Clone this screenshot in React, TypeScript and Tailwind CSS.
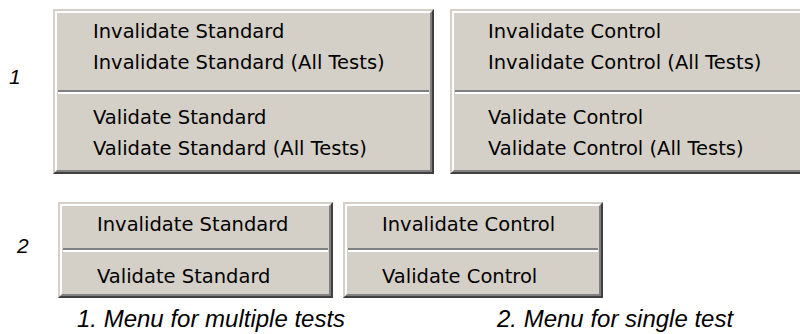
const menuFont = { fontFamily: '"DejaVu Sans", Tahoma, sans-serif' };
const labelFont = { fontFamily: '"Liberation Sans", Arial, sans-serif' };

const Separator = ({ h, top }: { h: string; top: string }) => (
  <div className={`${h} ${top} px-[1px]`}>
    <div className="h-[2px] bg-[#808080]" />
    <div className="h-[2px] bg-white" />
  </div>
);

const Menu = ({
  groups,
  width,
  itemH,
  padL,
  padT,
  padB,
  sepH,
  sepTop,
}: {
  groups: string[][];
  width: string;
  itemH: string;
  padL: string;
  padT: string;
  padB: string;
  sepH: string;
  sepTop: string;
}) => (
  <div
    className={`${width} shrink-0 border-2 border-t-[#d4d0c8] border-l-[#d4d0c8] border-r-[#404040] border-b-[#404040] bg-[#d4d0c8]`}
  >
    <div
      className={`border-2 border-t-white border-l-white border-r-[#808080] border-b-[#808080] ${padT} ${padB}`}
    >
      {groups.map((g, gi) => (
        <div key={gi}>
          {gi > 0 && <Separator h={sepH} top={sepTop} />}
          {g.map((label) => (
            <div
              key={label}
              className={`${itemH} ${padL} flex items-center text-[19.5px] text-black whitespace-nowrap`}
              style={menuFont}
            >
              {label}
            </div>
          ))}
        </div>
      ))}
    </div>
  </div>
);

export default function App() {
  return (
    <div className="w-[800px] h-[334px] overflow-hidden bg-white" style={labelFont}>
      {/* row 1: multiple tests */}
      <div className="flex items-start pt-[9px]">
        <div className="w-[53px] shrink-0 pt-[52px] pl-[9px] text-[21px] italic text-black">1</div>
        <Menu
          width="w-[381px]"
          itemH="h-[31px]"
          padL="pl-[36px]"
          padT="pt-[3px]"
          padB="pb-[6px]"
          sepH="h-[24px]"
          sepTop="pt-[12px]"
          groups={[
            ["Invalidate Standard", "Invalidate Standard (All Tests)"],
            ["Validate Standard", "Validate Standard (All Tests)"],
          ]}
        />
        <div className="w-[16px] shrink-0" />
        <Menu
          width="w-[360px]"
          itemH="h-[31px]"
          padL="pl-[34px]"
          padT="pt-[3px]"
          padB="pb-[6px]"
          sepH="h-[24px]"
          sepTop="pt-[12px]"
          groups={[
            ["Invalidate Control", "Invalidate Control (All Tests)"],
            ["Validate Control", "Validate Control (All Tests)"],
          ]}
        />
      </div>

      {/* row 2: single test */}
      <div className="flex items-start pt-[28px]">
        <div className="w-[58px] shrink-0 pt-[28px] pl-[17px] text-[21px] italic text-black">2</div>
        <Menu
          width="w-[275px]"
          itemH="h-[30px]"
          padL="pl-[35px]"
          padT="pt-[4px]"
          padB="pb-[2px]"
          sepH="h-[22px]"
          sepTop="pt-[8px]"
          groups={[["Invalidate Standard"], ["Validate Standard"]]}
        />
        <div className="w-[10px] shrink-0" />
        <Menu
          width="w-[260px]"
          itemH="h-[30px]"
          padL="pl-[35px]"
          padT="pt-[4px]"
          padB="pb-[2px]"
          sepH="h-[22px]"
          sepTop="pt-[8px]"
          groups={[["Invalidate Control"], ["Validate Control"]]}
        />
      </div>

      {/* captions */}
      <div className="flex pt-[8px] text-[24px] italic text-black leading-[26px]">
        <div className="w-[497px] shrink-0 pl-[77px]">1. Menu for multiple tests</div>
        <div>2. Menu for single test</div>
      </div>
    </div>
  );
}
